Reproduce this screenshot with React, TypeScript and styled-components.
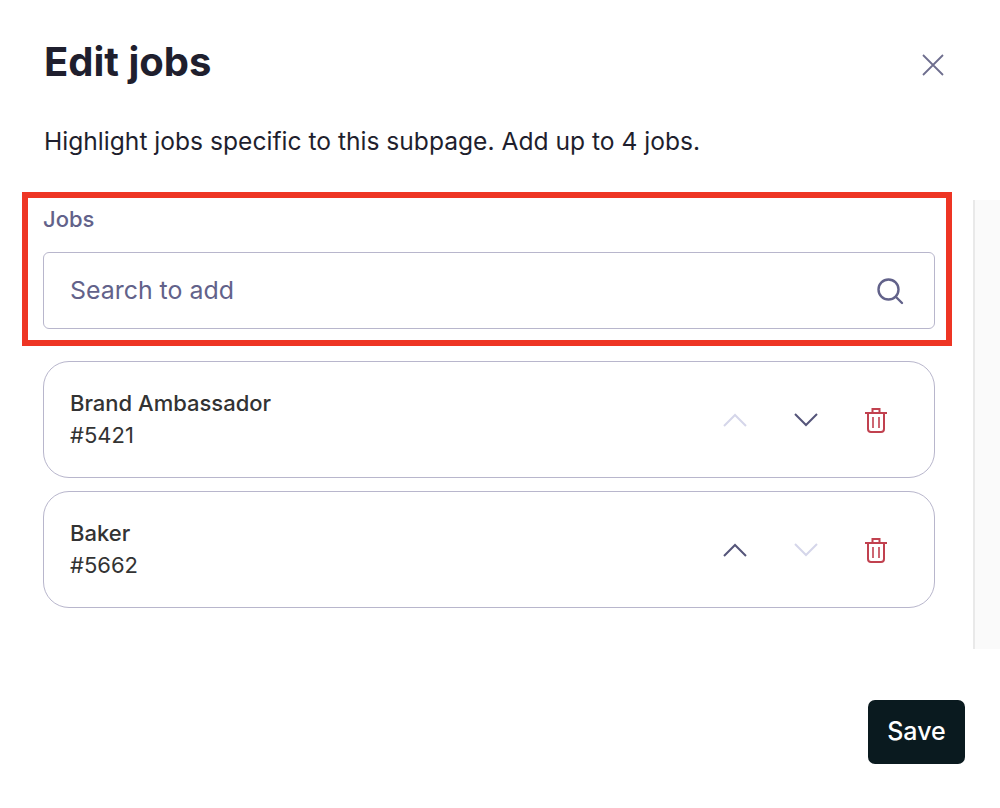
import React from 'react'
import styled, { createGlobalStyle } from 'styled-components'

const GlobalStyle = createGlobalStyle`
  html, body {
    margin: 0;
    background: #fff;
    font-family: Inter, "Liberation Sans", sans-serif;
  }
  * {
    box-sizing: border-box;
  }
`

const Page = styled.div`
  position: relative;
  width: 1000px;
  height: 808px;
  overflow: hidden;
  background: #fff;
`

const Header = styled.header`
  display: flex;
  justify-content: space-between;
  align-items: flex-start;
  padding: 36px 55px 0 44px;
`

const Title = styled.h1`
  margin: 0;
  font-size: 40px;
  line-height: 52px;
  font-weight: 700;
  color: #1f1f2e;
`

const CloseButton = styled.button`
  display: flex;
  margin-top: 17px;
  padding: 0;
  border: 0;
  background: none;
  color: #6e6e8e;
`

const Intro = styled.p`
  margin: 33px 0 0 44px;
  font-size: 24.6px;
  line-height: 40px;
  color: #1f1f2e;
`

const Body = styled.div`
  display: flex;
  justify-content: space-between;
  height: 449px;
  margin-top: 39px;
  padding-left: 43px;
`

const Column = styled.div`
  display: flex;
  flex-direction: column;
  width: 892px;
`

const Label = styled.label`
  font-size: 22px;
  line-height: 38px;
  font-weight: 500;
  color: #62628a;
`

const SearchBox = styled.div`
  display: flex;
  align-items: center;
  justify-content: space-between;
  height: 77px;
  margin-top: 14px;
  padding: 0 30px 0 26px;
  border: 1px solid #b8b6cc;
  border-radius: 6px;
  font-size: 24.9px;
  color: #62628a;
`

const Placeholder = styled.span`
  margin-bottom: 2px;
`

const JobList = styled.ul`
  display: flex;
  flex-direction: column;
  gap: 13px;
  margin: 32px 0 0;
  padding: 0;
  list-style: none;
`

const JobCard = styled.li`
  display: flex;
  align-items: center;
  justify-content: space-between;
  height: 117px;
  padding: 0 46px 0 26px;
  border: 1px solid #b8b6cc;
  border-radius: 26px;
`

const JobText = styled.div`
  padding-bottom: 2px;
  font-size: 22px;
  line-height: 32px;
  color: #333;
`

const JobName = styled.div`
  font-weight: 500;
`

const Actions = styled.div`
  display: flex;
  align-items: center;
  gap: 46px;

  button:first-child {
    margin-right: 1px;
  }
`

const IconButton = styled.button<{ $muted?: boolean; $danger?: boolean }>`
  display: flex;
  padding: 0;
  border: 0;
  background: none;
  color: ${p => (p.$danger ? '#c1414f' : p.$muted ? '#d5d6ea' : '#55557a')};
`

const ScrollTrack = styled.div`
  width: 27px;
  border-left: 2px solid #e9e9e9;
  background: #fafafa;
`

const Footer = styled.footer`
  display: flex;
  justify-content: flex-end;
  margin-top: 51px;
  padding-right: 35px;
`

const SaveButton = styled.button`
  width: 97px;
  height: 64px;
  padding: 0 0 2px;
  border: 0;
  border-radius: 7px;
  background: #0a1a1f;
  color: #fff;
  font-family: inherit;
  font-size: 25px;
  font-weight: 500;
`

const Highlight = styled.div`
  position: absolute;
  left: 22px;
  top: 192px;
  width: 930px;
  height: 154px;
  border: 6px solid #ee3524;
  pointer-events: none;
`

const CloseIcon = () => (
  <svg width="24" height="24" viewBox="0 0 24 24" fill="none" stroke="currentColor" strokeWidth="1.8">
    <path d="M2 2 L22 22 M22 2 L2 22" />
  </svg>
)

const SearchIcon = () => (
  <svg width="28" height="28" viewBox="0 0 28 28" fill="none" stroke="currentColor" strokeWidth="2.4" strokeLinecap="round">
    <circle cx="12.5" cy="12.5" r="10" />
    <path d="M20 20 L26 26" />
  </svg>
)

const ChevronIcon = ({ up }: { up?: boolean }) => (
  <svg width="24" height="14" viewBox="0 0 24 14" fill="none" stroke="currentColor" strokeWidth="2">
    <path d={up ? 'M1 13 L12 2 L23 13' : 'M1 1 L12 12 L23 1'} />
  </svg>
)

const TrashIcon = () => (
  <svg width="24" height="26" viewBox="0 0 24 26" fill="none" stroke="currentColor" strokeWidth="2">
    <path d="M1 6 H23" />
    <path d="M8.5 6 V2 H15.5 V6" />
    <path d="M4 6 V22 Q4 25 7 25 H17 Q20 25 20 22 V6" />
    <path d="M9 10 V21 M15 10 V21" strokeWidth="1.6" />
  </svg>
)

const jobs = [
  { name: 'Brand Ambassador', id: '#5421', upMuted: true, downMuted: false },
  { name: 'Baker', id: '#5662', upMuted: false, downMuted: true },
]

export default function App() {
  return (
    <Page>
      <GlobalStyle />
      <Header>
        <Title>Edit jobs</Title>
        <CloseButton aria-label="Close">
          <CloseIcon />
        </CloseButton>
      </Header>
      <Intro>Highlight jobs specific to this subpage. Add up to 4 jobs.</Intro>
      <Body>
        <Column>
          <Label>Jobs</Label>
          <SearchBox>
            <Placeholder>Search to add</Placeholder>
            <SearchIcon />
          </SearchBox>
          <JobList>
            {jobs.map(job => (
              <JobCard key={job.id}>
                <JobText>
                  <JobName>{job.name}</JobName>
                  {job.id}
                </JobText>
                <Actions>
                  <IconButton $muted={job.upMuted} aria-label="Move up">
                    <ChevronIcon up />
                  </IconButton>
                  <IconButton $muted={job.downMuted} aria-label="Move down">
                    <ChevronIcon />
                  </IconButton>
                  <IconButton $danger aria-label="Remove">
                    <TrashIcon />
                  </IconButton>
                </Actions>
              </JobCard>
            ))}
          </JobList>
        </Column>
        <ScrollTrack />
      </Body>
      <Footer>
        <SaveButton>Save</SaveButton>
      </Footer>
      <Highlight />
    </Page>
  )
}
